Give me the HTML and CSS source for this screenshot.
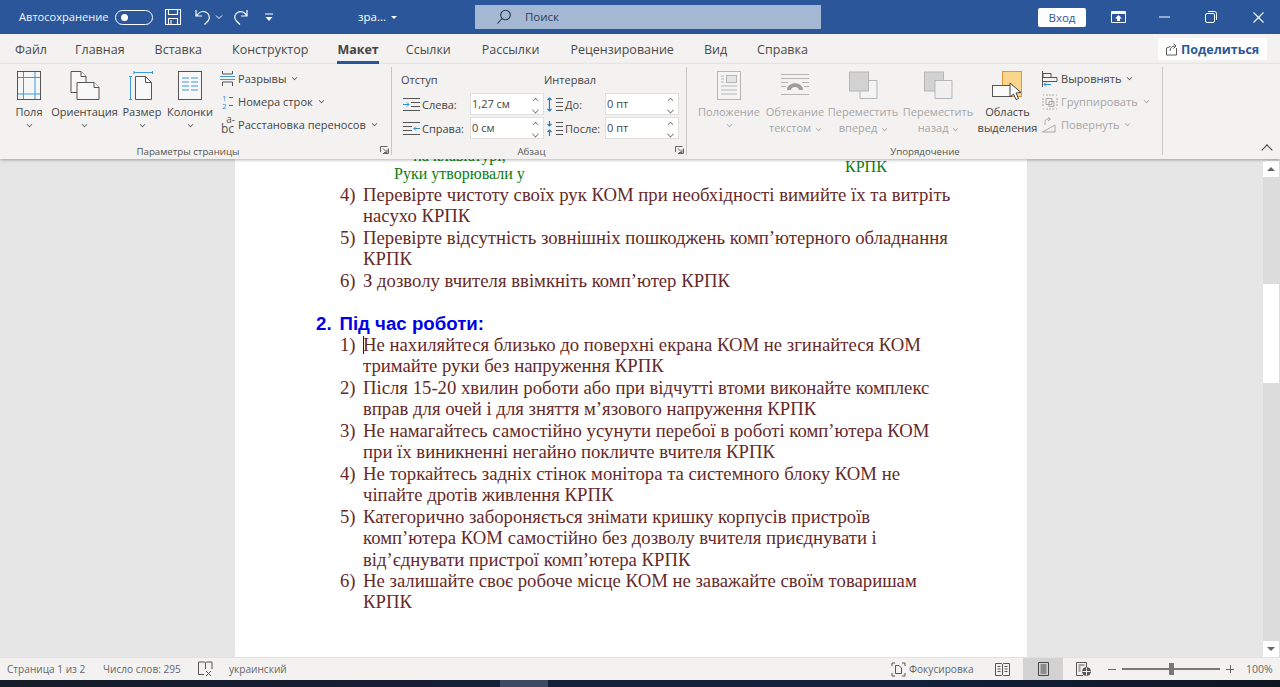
FILE: index.html
```html
<!DOCTYPE html>
<html lang="ru">
<head>
<meta charset="utf-8">
<title>Word</title>
<link rel="stylesheet" href="styles.css">
</head>
<body>
<div class="app">
  <header class="titlebar">
    <div class="tb-left">
      <span class="autosave">Автосохранение</span>
      <span class="toggle"><i></i></span>
      <svg class="q-save" width="18" height="18" viewBox="0 0 18 18" fill="none" stroke="#fff" stroke-width="1.1"><path d="M1.5 1.5h15v15h-15zM4.5 1.5v5h9v-5M4.5 16.5v-6h9v6M7 12v4"/></svg>
      <svg class="q-undo" width="18" height="18" viewBox="0 0 18 18" fill="none" stroke="#fff" stroke-width="1.2"><path d="M2 2v6h6M2.5 8C5 4 9 2.500 12.500 4.500c3.500 2 3.500 6.500 1.500 8.500l-3.500 3.500"/></svg>
      <svg class="q-chev" width="8" height="6" viewBox="0 0 8 6" fill="none" stroke="#fff"><path d="M1 1.500l3 3 3-3"/></svg>
      <svg class="q-redo" width="18" height="18" viewBox="0 0 18 18" fill="none" stroke="#fff" stroke-width="1.2"><path d="M15 2v6H9M15 8C13 4 9 2.500 5.500 4.500c-3.500 2-3.500 6.500-1 8.500l3.500 3.500"/></svg>
      <svg class="q-more" width="8" height="9" viewBox="0 0 8 9"><path d="M0 .5h8v1H0zM.5 4h7L4 8z" fill="#fff"/></svg>
      <span class="docname">зра...</span>
      <span class="caret"></span>
    </div>
    <div class="search">
      <svg width="16" height="16" viewBox="0 0 16 16" fill="none" stroke="#26344e" stroke-width="1.1"><circle cx="9.500" cy="6" r="4.800"/><path d="M6 9.500l-4.500 5"/></svg>
      <span>Поиск</span>
    </div>
    <div class="tb-right">
      <button class="signin">Вход</button>
      <svg class="w-ribbon" width="15" height="12" viewBox="0 0 15 12"><path d="M.5.500h14v11H.5z" fill="none" stroke="#fff"/><path d="M1 1h13v2H1z" fill="#fff"/><path d="M7.500 4l3.500 3.500H9V10H6V7.500H4z" fill="#fff"/></svg>
      <svg class="w-min" width="11" height="2" viewBox="0 0 11 2"><path d="M0 1h11" stroke="#fff"/></svg>
      <svg class="w-max" width="12" height="12" viewBox="0 0 12 12" fill="none" stroke="#fff"><rect x=".5" y="2.500" width="9" height="9" rx="1.500"/><path d="M3 .5h6.500a2 2 0 0 1 2 2V9"/></svg>
      <svg class="w-close" width="11" height="11" viewBox="0 0 11 11" stroke="#fff" stroke-width="1.100"><path d="M.5.500l10 10M10.500.500l-10 10"/></svg>
    </div>
  </header>

  <nav class="tabs">
    <span class="tab">Файл</span>
    <span class="tab">Главная</span>
    <span class="tab">Вставка</span>
    <span class="tab">Конструктор</span>
    <span class="tab active">Макет</span>
    <span class="tab">Ссылки</span>
    <span class="tab">Рассылки</span>
    <span class="tab">Рецензирование</span>
    <span class="tab">Вид</span>
    <span class="tab">Справка</span>
    <button class="share">
      <svg width="14" height="14" viewBox="0 0 14 14" fill="none" stroke="#5a5a5a"><path d="M1.500 6v7h10V6M1.500 6l4-1.500M5 9c0-3 2-5 5-5M8.500 1.500L11 4 8.500 6.500" /></svg>
      Поделиться
    </button>
  </nav>

  <section class="ribbon">
    <div class="group g-page">
      <div class="g-body">
        <div class="big b-fields">
          <svg width="24" height="29" viewBox="0 0 24 29"><rect x=".5" y=".5" width="23" height="28" fill="#f6f6f6" stroke="#555"/><path d="M6.500 1v27M18 1v27M1 6.500h22M1 23h22" stroke="#3d9bd8" fill="none"/></svg>
          <span>Поля</span><em class="chev"></em>
        </div>
        <div class="big b-orient">
          <svg width="30" height="29" viewBox="0 0 30 29" fill="#f8f8f8" stroke="#555"><path d="M1 .5h10l5 5v16H1z"/><path d="M11 .5v5h5"/><path d="M7 11.500h17l5 5v12H7z"/><path d="M24 11.500v5h5"/></svg>
          <span>Ориентация</span><em class="chev"></em>
        </div>
        <div class="big b-size">
          <svg width="24" height="29" viewBox="0 0 24 29"><path d="M6.500 5.500h10l6 6v17h-16z" fill="#f8f8f8" stroke="#555"/><path d="M16.500 5.500v6h6" fill="none" stroke="#555"/><path d="M1.500 5v24M0 5.500h3M0 28.500h3M5 1.500h19M5 0v3M23.500 0v3" stroke="#3d9bd8" fill="none"/></svg>
          <span>Размер</span><em class="chev"></em>
        </div>
        <div class="big b-cols">
          <svg width="24" height="29" viewBox="0 0 24 29"><rect x=".5" y=".5" width="23" height="28" fill="#f8f8f8" stroke="#555"/><path d="M4 7h7M13 7h7M4 11h7M13 11h7M4 15h7M13 15h7M4 19h7M13 19h7" stroke="#3d9bd8" fill="none"/></svg>
          <span>Колонки</span><em class="chev"></em>
        </div>
        <div class="stack s-page">
          <div class="small">
            <svg width="15" height="15" viewBox="0 0 15 15" fill="none"><path d="M2.500 0v3h10V0M2.500 15v-4h10v4" stroke="#555"/><path d="M0 5.500h15M0 8.500h15" stroke="#3d9bd8"/></svg>
            <span>Разрывы</span><em class="chev"></em>
          </div>
          <div class="small">
            <span class="num-ic"><b>1</b><b>2</b><i></i><i></i></span>
            <span>Номера строк</span><em class="chev"></em>
          </div>
          <div class="small">
            <span class="hy-ic"><span class="hy-a">a-</span><span class="hy-b">bc</span></span>
            <span>Расстановка переносов</span><em class="chev"></em>
          </div>
        </div>
      </div>
      <div class="g-label shifted">Параметры страницы<svg class="launcher" width="9" height="8" viewBox="0 0 9 8" fill="none" stroke="#666"><path d="M.5 6V.5h7M8.500 2.500v5H3M3 2.500l4 4M7 3.500v3H4"/></svg></div>
    </div>

    <div class="group g-para">
      <div class="g-body para">
        <div class="para-col">
          <div class="para-head">Отступ</div>
          <div class="para-row">
            <svg class="pi" width="17" height="13" viewBox="0 0 17 13" fill="none"><path d="M0 .5h17M8 4.500h9M8 8.500h9M0 12.500h17" stroke="#555"/><path d="M0 6.500h6M4 4.500l2 2-2 2" stroke="#2e8fd0"/></svg>
            <label class="l1">Слева:</label>
            <span class="spin i1">1,27 см<span class="arrows"></span></span>
          </div>
          <div class="para-row">
            <svg class="pi" width="17" height="13" viewBox="0 0 17 13" fill="none"><path d="M0 .5h17M0 4.500h9M0 8.500h9M0 12.500h17" stroke="#555"/><path d="M11 6.500h6M13 4.500l-2 2 2 2" stroke="#2e8fd0"/></svg>
            <label class="l1">Справа:</label>
            <span class="spin i1">0 см<span class="arrows"></span></span>
          </div>
        </div>
        <div class="para-col">
          <div class="para-head">Интервал</div>
          <div class="para-row">
            <svg class="pi2" width="17" height="15" viewBox="0 0 17 15" fill="none"><path d="M10 1.500h7M10 5.500h7M10 9.500h7M10 13.500h7" stroke="#555"/><path d="M3.500 1v13M1.500 3l2-2 2 2M1.500 12l2 2 2-2" stroke="#1f7fc4" stroke-width="1.200"/></svg>
            <label class="l2">До:</label>
            <span class="spin i2">0 пт<span class="arrows"></span></span>
          </div>
          <div class="para-row">
            <svg class="pi2" width="17" height="15" viewBox="0 0 17 15" fill="none"><path d="M10 1.500h7M10 5.500h7M10 9.500h7M10 13.500h7" stroke="#555"/><path d="M3.500 0v5M1.500 3l2 2 2-2M3.500 9v6M1.500 11l2-2 2 2" stroke="#1f7fc4" stroke-width="1.200"/></svg>
            <label class="l2">После:</label>
            <span class="spin i2">0 пт<span class="arrows"></span></span>
          </div>
        </div>
      </div>
      <div class="g-label shifted">Абзац<svg class="launcher" width="9" height="8" viewBox="0 0 9 8" fill="none" stroke="#666"><path d="M.5 6V.5h7M8.500 2.500v5H3M3 2.500l4 4M7 3.500v3H4"/></svg></div>
    </div>

    <div class="group g-arr">
      <div class="g-body">
        <div class="big dis b-pos">
          <svg width="24" height="29" viewBox="0 0 24 29" fill="none" stroke="#b5b5b5"><rect x=".5" y=".5" width="23" height="28" fill="#f4f4f4"/><rect x="9.500" y="4.500" width="10" height="7" fill="#e4e4e4"/><path d="M4 5h3M4 8h3M4 11h3M4 15h16M4 19h16M4 23h16"/></svg>
          <span>Положение</span><em class="chev"></em>
        </div>
        <div class="big dis b-wrap">
          <svg width="28" height="24" viewBox="0 0 28 24" fill="none" stroke="#b5b5b5"><path d="M0 .5h28M0 4.500h28M0 8.500h7M21 8.500h7M0 12.500h5M23 12.500h5M0 20.500h28"/><path d="M6 16c0-9 16-9 16 0h-4c0-4-8-4-8 0z" fill="#9d9d9d" stroke="none"/></svg>
          <span>Обтекание<br>текстом <em class="chev in"></em></span>
        </div>
        <div class="big dis b-front">
          <svg width="29" height="28" viewBox="0 0 29 28" stroke="#b5b5b5"><path d="M11 9h17v18H11z" fill="#f4f4f4"/><rect x=".5" y=".5" width="19" height="19" fill="#d2d2d2"/></svg>
          <span>Переместить<br>вперед <em class="chev in"></em></span>
        </div>
        <div class="big dis b-back">
          <svg width="29" height="28" viewBox="0 0 29 28" stroke="#b5b5b5"><rect x=".5" y=".5" width="19" height="19" fill="#d2d2d2"/><path d="M11 9h17v18H11z" fill="#f0f0f0"/></svg>
          <span>Переместить<br>назад <em class="chev in"></em></span>
        </div>
        <div class="big b-sel">
          <svg width="31" height="31" viewBox="0 0 31 31"><rect x="10.500" y=".5" width="19" height="25" fill="#fbd68a" stroke="#e0963c"/><rect x=".5" y="14.500" width="19" height="11" fill="#fafafa" stroke="#555"/><path d="M18 12l0 14 3.500-3 2.500 5.500 2.500-1-2.500-5.500 5-.5z" fill="#fff" stroke="#444"/></svg>
          <span>Область<br>выделения</span>
        </div>
        <div class="stack s-arr">
          <div class="small">
            <svg width="16" height="16" viewBox="0 0 16 16" fill="none"><path d="M.5 0v16" stroke="#555"/><path d="M1 2.500h8v4H1zM1 6.500h14v4H1" stroke="#555"/><path d="M2 13.500h7M4 11.500l-2 2 2 2" stroke="#2e8fd0"/></svg>
            <span>Выровнять</span><em class="chev"></em>
          </div>
          <div class="small dis">
            <svg width="16" height="16" viewBox="0 0 16 16" fill="none" stroke="#a8a8a8"><path d="M1 1h1M14 1h1M1 15h1M14 15h1M1 4v8M15 4v8M4 1h8M4 15h8" stroke-dasharray="2 1"/><path d="M4 4.500h6v6H4zM7 7.500h5v5H7z"/></svg>
            <span>Группировать</span><em class="chev"></em>
          </div>
          <div class="small dis">
            <svg width="16" height="16" viewBox="0 0 16 16" fill="none" stroke="#a8a8a8"><path d="M.5 15L13 8v7zM3 8V4.500C3 2.500 5 1.500 8 2M6 0l2.500 2L6 4"/></svg>
            <span>Повернуть</span><em class="chev"></em>
          </div>
        </div>
      </div>
      <div class="g-label">Упорядочение</div>
    </div>
    <span class="collapse"></span>
  </section>

  <main class="workspace">
    <div class="doc">
      <article class="page">
        <div class="green-row">
          <div class="green-l">на клавіатурі,<br>Руки утворювали у</div>
          <div class="green-r">КРПК</div>
        </div>
        <ol class="steps">
          <li><span class="n">4)</span><span class="t">Перевірте чистоту своїх рук КОМ при необхідності вимийте їх та витріть насухо КРПК</span></li>
          <li><span class="n">5)</span><span class="t">Перевірте відсутність зовнішніх пошкоджень комп’ютерного обладнання КРПК</span></li>
          <li><span class="n">6)</span><span class="t">З дозволу вчителя ввімкніть комп’ютер КРПК</span></li>
        </ol>
        <h2 class="head"><span class="hn">2.</span>Під час роботи:</h2>
        <ol class="steps">
          <li><span class="n">1)</span><span class="t"><i class="cursor"></i>Не нахиляйтеся близько до поверхні екрана КОМ не згинайтеся КОМ тримайте руки без напруження КРПК</span></li>
          <li><span class="n">2)</span><span class="t">Після 15-20 хвилин роботи або при відчутті втоми виконайте комплекс вправ для очей і для зняття м’язового напруження КРПК</span></li>
          <li><span class="n">3)</span><span class="t">Не намагайтесь самостійно усунути перебої в роботі комп’ютера КОМ при їх виникненні негайно покличте вчителя КРПК</span></li>
          <li><span class="n">4)</span><span class="t">Не торкайтесь задніх стінок монітора та системного блоку КОМ не чіпайте дротів живлення КРПК</span></li>
          <li><span class="n">5)</span><span class="t">Категорично забороняється знімати кришку корпусів пристроїв комп’ютера КОМ самостійно без дозволу вчителя приєднувати і від’єднувати пристрої комп’ютера КРПК</span></li>
          <li><span class="n">6)</span><span class="t">Не залишайте своє робоче місце КОМ не заважайте своїм товаришам КРПК</span></li>
        </ol>
      </article>
    </div>
    <aside class="scrollbar">
      <span class="sb-btn up"></span>
      <span class="sb-thumb"></span>
      <span class="sb-btn down"></span>
    </aside>
  </main>

  <footer class="status">
    <span class="st-a">Страница 1 из 2</span>
    <span class="st-b">Число слов: 295</span>
    <svg class="st-ic" width="17" height="16" viewBox="0 0 17 16" fill="none" stroke="#555"><path d="M7 13.500H1.500V1h5.500c1 0 1.500 .5 1.500 1.500 0-1 .5-1.500 1.500-1.500h5v7M8.500 2.500V8"/><path d="M9 10l5 5M14 10l-5 5"/></svg>
    <span class="st-c">украинский</span>
    <span class="st-spacer"></span>
    <svg class="st-focus" width="15" height="15" viewBox="0 0 15 15" fill="none" stroke="#555"><path d="M4.500 3.500h3.500l2.500 2.500v5.500h-6zM1 4V1h3M11 1h3v3M1 11v3h3M14 11v3h-3"/></svg>
    <span class="st-d">Фокусировка</span>
    <span class="view v1"><svg width="15" height="13" viewBox="0 0 15 13" fill="none" stroke="#555"><path d="M.5.500h6l1 1 1-1h6v12h-6l-1-1-1 1h-6zM7.500 1.500v10M2.500 3.500h3M2.500 6h3M2.500 8.500h3M9.500 3.500h3M9.500 6h3M9.500 8.500h3"/></svg></span>
    <span class="view v2"><svg width="11" height="14" viewBox="0 0 11 14" fill="none" stroke="#444"><path d="M.5.500h10v13H.5zM2.500 3h6M2.500 5h6M2.500 7h6M2.500 9h6M2.500 11h6"/></svg></span>
    <span class="view v3"><svg width="15" height="14" viewBox="0 0 15 14" fill="none" stroke="#555"><path d="M7 13.500H.5V.5h10v6M2.500 3h6M2.500 5h2M2.500 7h2M2.500 9h2"/><circle cx="10.500" cy="9.500" r="4" fill="#555"/><path d="M6.500 9.500h8M10.500 5.500v8" stroke="#f3f2f1"/></svg></span>
    <span class="zoom-m"></span>
    <span class="slider"><i></i></span>
    <span class="zoom-p"></span>
    <span class="st-e">100%</span>
  </footer>
  <div class="taskbar"><span class="task-on"></span></div>
</div>
</body>
</html>
```

FILE: styles.css
```css
* { box-sizing: border-box; }
html, body { margin: 0; height: 100%; overflow: hidden; }
body { font-family: "Open Sans", "Noto Sans", sans-serif; color: #444; }
.app { display: flex; flex-direction: column; width: 1280px; height: 687px; }
svg { display: block; flex: none; }

/* title bar */
.titlebar { height: 34px; flex: none; background: #2b579a; display: flex; align-items: center; color: #fff; position: relative; }
.tb-left { width: 475px; display: flex; align-items: center; padding-left: 19px; flex: none; }
.autosave { font-size: 11.1px; width: 96px; white-space: nowrap; color: #f0f4fa; line-height: 14px; margin-top: -1px; }
.toggle { width: 38px; height: 15px; border: 1px solid #fff; border-radius: 8px; display: block; padding: 3px 0 0 5px; }
.toggle i { display: block; width: 7px; height: 7px; background: #fff; border-radius: 50%; }
.q-save { margin-left: 11px; }
.q-undo { margin-left: 12px; }
.q-chev { margin-left: 3px; }
.q-redo { margin-left: 9px; }
.q-more { margin-left: 15px; }
.docname { margin-left: 85px; font-size: 11.5px; width: 32px; white-space: nowrap; margin-top: -1px; }
.caret { width: 0; height: 0; border: 3px solid transparent; border-top: 3px solid #fff; border-bottom: 0; margin-left: 1px; }
.search { width: 346px; height: 24px; background: #a5b8d3; display: flex; align-items: center; padding-left: 21px; flex: none; font-size: 11.5px; color: #2c3a55; }
.search span { margin: -1px 0 0 13px; }
.tb-right { flex: 1; display: flex; align-items: center; padding-left: 217px; }
.signin { width: 48px; height: 19px; border: 0; border-radius: 2px; background: #fff; color: #2b579a; font: 11.5px "Open Sans", sans-serif; padding: 0; }
.w-ribbon { margin-left: 25px; }
.w-min { margin-left: 33px; }
.w-max { margin-left: 35px; }
.w-close { margin-left: 36px; }

/* tabs */
.tabs { height: 30px; flex: none; background: #f3f2f1; display: flex; align-items: center; padding-left: 15px; gap: 30px; position: relative; font-size: 12.5px; }
.tab { position: relative; line-height: 30px; padding-top: 1px; white-space: nowrap; color: #4a4a4a; }
.tab:nth-child(2) { margin-left: -2px; }
.tab.active { font-weight: 700; color: #444; margin-left: -1px; }
.tab.active + .tab { margin-left: -3px; }
.tab:nth-child(7) { margin-left: 1px; }
.tab:nth-child(8) { margin-left: 1px; }
.tab.active::after { content: ""; position: absolute; left: 0; right: 0; bottom: 1px; height: 3px; background: #2b579a; }
.share { position: absolute; left: 1158px; top: 4px; width: 109px; height: 22px; background: #fff; border: 0; border-radius: 2px; display: flex; align-items: center; gap: 2px; padding: 0 0 0 7px; font: 700 12.5px "Open Sans", sans-serif; color: #2b579a; white-space: nowrap; }

/* ribbon */
.ribbon { height: 95px; flex: none; background: #f3f2f1; display: flex; position: relative; z-index: 2; box-shadow: 0 1px 3px rgba(0,0,0,.3); }
.group { display: flex; flex-direction: column; position: relative; flex: none; }
.group::after { content: ""; position: absolute; right: 0; top: 3px; bottom: 4px; width: 1px; background: #c8c6c4; }
.g-page { width: 392px; }
.g-para { width: 295px; }
.g-arr { width: 476px; }
.g-body { flex: 1; display: flex; min-height: 0; }
.g-label { height: 16px; line-height: 18px; text-align: center; font-size: 9.7px; color: #555; position: relative; margin-top: -3px; }
.g-label.shifted { padding-right: 16px; }
.launcher { position: absolute; right: 3px; top: 3px; }
.big { display: flex; flex-direction: column; align-items: center; flex: none; padding-top: 7px; font-size: 11px; line-height: 16px; text-align: center; white-space: nowrap; color: #444; }
.big svg { height: 29px; margin-bottom: 4px; }
.big span { display: block; }
.chev { display: block; width: 5px; height: 5px; border: solid #555; border-width: 0 1px 1px 0; transform: rotate(45deg) scale(.8); margin: 2px auto 0; }
.chev.in { display: inline-block; margin: 0 0 2px 2px; vertical-align: middle; }
.dis, .dis .chev { color: #a6a6a6; border-color: #a6a6a6; }
.b-fields { width: 36px; margin-left: 11px; }
.b-orient { width: 75px; }
.b-size { width: 40px; }
.b-size svg { margin-right: 3px; }
.b-cols { width: 56px; }
.stack { display: flex; flex-direction: column; padding-top: 3px; font-size: 11.1px; margin-left: 2px; }
.small { height: 23px; display: flex; align-items: center; gap: 3px; white-space: nowrap; }
.small .chev { margin: 0 0 2px 3px; }
.num-ic { width: 15px; height: 16px; position: relative; display: block; }
.num-ic b { position: absolute; left: 2px; top: 0; font: 8px/8px "Open Sans", sans-serif; color: #2e8fd0; }
.num-ic b + b { top: 8px; }
.num-ic i { position: absolute; left: 9px; top: 3px; width: 4px; height: 1px; background: #666; }
.num-ic i + i { top: 11px; }
.hy-ic { width: 15px; height: 18px; position: relative; display: block; color: #555; }
.hy-a, .hy-b { position: absolute; right: 0; top: -1px; font: 10px/9px "Open Sans", sans-serif; }
.hy-b { top: 8px; right: 1px; font-size: 12px; }
.para { padding: 9px 0 0 9px; }
.para-col { width: 143px; flex: none; font-size: 11px; }
.para-col + .para-col { width: 138px; }
.para-head { height: 19px; line-height: 14px; }
.para-row { height: 24px; display: flex; align-items: center; }
.pi { margin: 0 2px 0 2px; }
.pi2 { margin: 0 2px 0 2px; }
.l1 { width: 48px; white-space: nowrap; }
.l2 { width: 40px; white-space: nowrap; }
.spin { width: 74px; height: 22px; background: #fff; border: 1px solid #e1dfdd; padding-left: 1px; line-height: 20px; position: relative; white-space: nowrap; }
.arrows { position: absolute; right: 5px; top: 4px; width: 5px; height: 5px; border: solid #666; border-width: 1px 0 0 1px; transform: rotate(45deg) scale(.8); }
.arrows::after { content: ""; position: absolute; left: 7px; top: 7px; width: 5px; height: 5px; border: solid #666; border-width: 0 1px 1px 0; }
.b-pos { width: 68px; margin-left: 8px; }
.b-wrap { width: 64px; }
.b-wrap svg { height: 24px; margin: 3px 0 6px; }
.b-front { width: 72px; }
.b-back { width: 78px; }
.b-sel { width: 61px; }
.b-sel svg { height: 31px; margin-bottom: 2px; }
.s-arr { margin-left: 4px; }
.collapse { position: absolute; right: 9px; bottom: 5px; width: 8px; height: 8px; border: solid #444; border-width: 1px 0 0 1px; transform: rotate(45deg); }

/* document */
.workspace { flex: 1; display: flex; min-height: 0; background: #e6e6e6; }
.doc { flex: 1; overflow: hidden; display: flex; justify-content: center; }
.page { width: 792px; height: 800px; flex: none; background: #fff; padding: 0 70px 0 81px; margin: -12px 1px 0 0; font: 18.73px/21.45px "Liberation Serif", serif; color: #652a29; }
.green-row { display: flex; color: #0b7d10; font-size: 16px; line-height: 18.4px; }
.green-l { width: 287px; text-align: center; }
.green-r { margin-left: 242px; padding-top: 11px; }
.steps { list-style: none; margin: 0; padding: 0 0 0 24px; }
.steps li { display: flex; }
.n { width: 23px; flex: none; }
.t { flex: 1; position: relative; }
.cursor { position: absolute; left: 0; top: 2px; width: 1px; height: 18px; background: #222; }
.head { margin: 21.45px 0 0; font: 700 18.67px/21.45px "Liberation Sans", sans-serif; color: #0000e6; display: flex; }
.hn { width: 23.500px; }
.scrollbar { width: 17px; background: #dcdcdc; display: flex; flex-direction: column; position: relative; flex: none; padding-top: 2px; }
.sb-btn { width: 16px; height: 16px; background: #fff; position: relative; display: block; }
.sb-btn::after { content: ""; position: absolute; left: 4px; top: 6px; border: 4px solid transparent; border-top: 0; border-bottom: 4px solid #666; }
.sb-btn.down { margin-top: auto; }
.sb-btn.down::after { border-bottom: 0; border-top: 4px solid #666; }
.sb-thumb { width: 16px; height: 99px; background: #fff; margin-top: 107px; display: block; }

/* status bar */
.status { height: 23px; flex: none; background: #f3f2f1; display: flex; align-items: center; font-size: 10.1px; color: #666; padding-left: 7px; border-top: 1px solid #e1e1e1; }
.st-a { width: 96px; white-space: nowrap; }
.st-b { width: 94px; white-space: nowrap; }
.st-ic { margin-right: 15px; }
.st-spacer { flex: 1; }
.st-focus { margin-right: 3px; }
.st-d { width: 70px; white-space: nowrap; }
.view { width: 40px; height: 22px; display: flex; align-items: center; justify-content: center; }
.view.v1 { margin-left: 3px; margin-right: 1px; }
.view.v2 { background: #d2d2d2; }
.zoom-m { width: 8px; height: 1px; background: #666; margin-left: 5px; }
.slider { width: 98px; height: 2px; background: #777; margin-left: 6px; position: relative; }
.slider i { position: absolute; left: 47px; top: -5px; width: 5px; height: 12px; background: #777; }
.zoom-p { width: 8px; height: 8px; margin-left: 6px; background: linear-gradient(#666,#666) center/8px 1px no-repeat, linear-gradient(#666,#666) center/1px 8px no-repeat; }
.st-e { margin-left: 12px; width: 34px; white-space: nowrap; font-size: 10.5px; }
.taskbar { height: 7px; flex: none; background: linear-gradient(90deg, #151c28, #15203a 50%, #12203c 70%, #10161f); position: relative; }
.task-on { position: absolute; left: 500px; top: 0; width: 48px; height: 7px; background: #3e4a63; }
```
